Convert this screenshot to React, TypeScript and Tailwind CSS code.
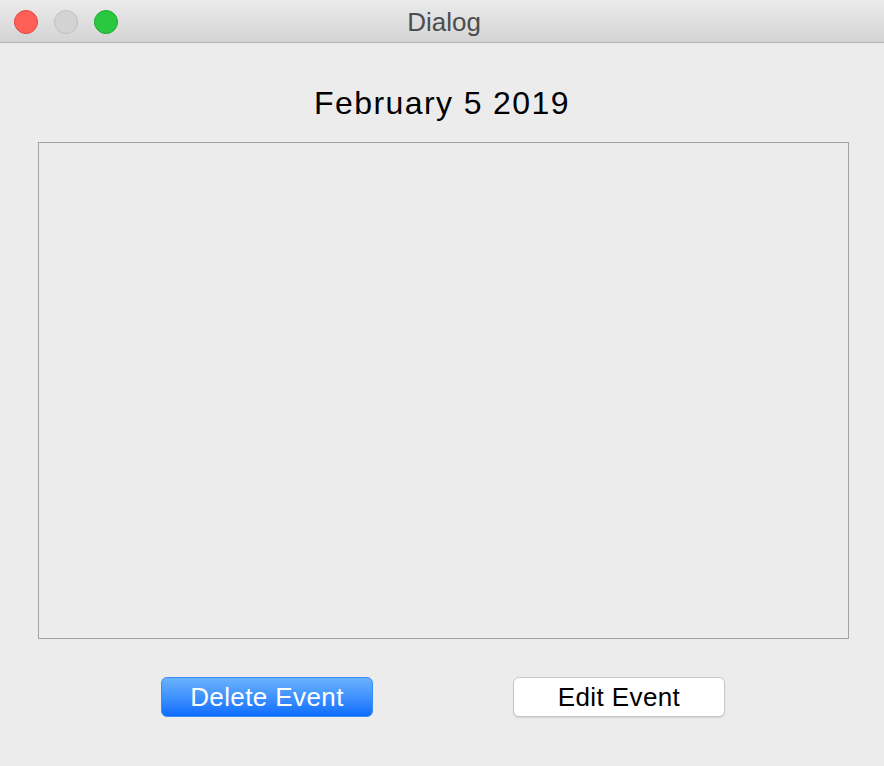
export default function App() {
  return (
    <div className="w-[884px] h-[766px] bg-[#ececec] flex flex-col overflow-hidden" style={{ fontFamily: '"Liberation Sans", Arial, sans-serif' }}>
      {/* Title bar */}
      <div className="relative h-[43px] shrink-0 border-b border-[#b4b4b4] bg-gradient-to-b from-[#ebebeb] to-[#d4d4d4] flex items-center justify-center">
        <div className="absolute left-[14px] top-[10px] flex gap-[16px]">
          <span className="w-[24px] h-[24px] rounded-full bg-[#fe5f57] border border-[#e2463f]" />
          <span className="w-[24px] h-[24px] rounded-full bg-[#d3d3d3] border border-[#bfbfbf]" />
          <span className="w-[24px] h-[24px] rounded-full bg-[#29c840] border border-[#1ea830]" />
        </div>
        <span className="text-[26px] leading-none text-[#4d4d4d] pt-[2px] pl-[4px]">Dialog</span>
      </div>

      {/* Date */}
      <div className="pt-[44px] text-center text-[32px] leading-[32px] tracking-[1.4px] text-black">
        February 5 2019
      </div>

      {/* Event list */}
      <div className="mt-[23px] ml-[38px] w-[811px] h-[497px] border border-[#a3a3a3] bg-[#ececec]" />

      {/* Buttons */}
      <div className="mt-[38px] flex justify-center gap-[140px] pl-[2px]">
        <button className="w-[212px] h-[40px] rounded-[6px] border border-[#3a8cf7] bg-gradient-to-b from-[#6ab2fb] to-[#096cfe] text-white text-[26px] leading-[38px] tracking-[0.4px]">
          Delete Event
        </button>
        <button className="w-[212px] h-[40px] rounded-[6px] border border-[#c8c8c8] bg-white shadow-[0_1px_1px_rgba(0,0,0,0.12)] text-black text-[26px] leading-[38px] tracking-[0.4px]">
          Edit Event
        </button>
      </div>
    </div>
  );
}
